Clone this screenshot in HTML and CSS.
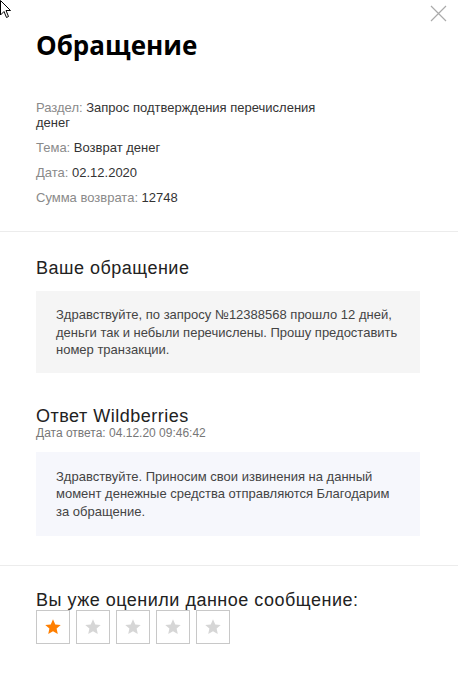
FILE: index.html
```
<!DOCTYPE html>
<html lang="ru">
<head>
    <meta charset="UTF-8">
    <meta name="viewport" content="width=device-width, initial-scale=1.0">
    <title>Обращение</title>
    <link rel="stylesheet" href="styles.css">
</head>
<body>
    <div class="modal">
        <svg class="cursor" width="12" height="20" viewBox="0 0 12 20">
            <path d="M0.5 0.5 L0.5 15 L4 11.5 L6.5 17.5 L8.5 16.5 L6 10.5 L10.5 10.5 Z" fill="#fff" stroke="#000" stroke-width="1"/>
        </svg>
        <button class="close" aria-label="Закрыть">
            <svg width="17" height="17" viewBox="0 0 17 17">
                <path d="M1 1 L16 16 M16 1 L1 16" stroke="#aaa" stroke-width="1.2"/>
            </svg>
        </button>

        <section class="head">
            <h1>Обращение</h1>
            <ul class="info">
                <li><span class="label">Раздел:</span> Запрос подтверждения перечисления денег</li>
                <li><span class="label">Тема:</span> Возврат денег</li>
                <li><span class="label">Дата:</span> 02.12.2020</li>
                <li><span class="label">Сумма возврата:</span> 12748</li>
            </ul>
        </section>

        <section class="messages">
            <h2>Ваше обращение</h2>
            <div class="message">
                Здравствуйте, по запросу №12388568 прошло 12 дней, деньги так и небыли перечислены. Прошу предоставить номер транзакции.
            </div>

            <h2 class="answer-title">Ответ Wildberries</h2>
            <div class="answer-date">Дата ответа: 04.12.20 09:46:42</div>
            <div class="message answer">
                Здравствуйте. Приносим свои извинения на данный момент денежные средства отправляются Благодарим за обращение.
            </div>
        </section>

        <section class="rating">
            <h2>Вы уже оценили данное сообщение:</h2>
            <div class="stars">
                <span class="star active"><svg viewBox="0 0 20 20"><path d="M10 1.5 L12.5 7.2 L18.6 7.7 L14 11.8 L15.3 17.8 L10 14.7 L4.7 17.8 L6 11.8 L1.4 7.7 L7.5 7.2 Z"/></svg></span>
                <span class="star"><svg viewBox="0 0 20 20"><path d="M10 1.5 L12.5 7.2 L18.6 7.7 L14 11.8 L15.3 17.8 L10 14.7 L4.7 17.8 L6 11.8 L1.4 7.7 L7.5 7.2 Z"/></svg></span>
                <span class="star"><svg viewBox="0 0 20 20"><path d="M10 1.5 L12.5 7.2 L18.6 7.7 L14 11.8 L15.3 17.8 L10 14.7 L4.7 17.8 L6 11.8 L1.4 7.7 L7.5 7.2 Z"/></svg></span>
                <span class="star"><svg viewBox="0 0 20 20"><path d="M10 1.5 L12.5 7.2 L18.6 7.7 L14 11.8 L15.3 17.8 L10 14.7 L4.7 17.8 L6 11.8 L1.4 7.7 L7.5 7.2 Z"/></svg></span>
                <span class="star"><svg viewBox="0 0 20 20"><path d="M10 1.5 L12.5 7.2 L18.6 7.7 L14 11.8 L15.3 17.8 L10 14.7 L4.7 17.8 L6 11.8 L1.4 7.7 L7.5 7.2 Z"/></svg></span>
            </div>
        </section>
    </div>
</body>
</html>
```

FILE: styles.css
```
body {
    margin: 0;
    background: #fff;
    font-family: "Liberation Sans", Arial, sans-serif;
    color: #333;
}

.modal {
    position: relative;
    width: 458px;
    min-height: 693px;
}

.cursor {
    position: absolute;
    left: 0;
    top: 0;
}

.close {
    position: absolute;
    top: 5px;
    right: 11px;
    padding: 0;
    border: none;
    background: none;
    cursor: pointer;
}

.close svg {
    display: block;
}

.head {
    padding: 26px 36px 26px;
    border-bottom: 1px solid #ececec;
}

h1 {
    margin: 0 0 36px;
    font-family: "Open Sans", sans-serif;
    font-size: 26px;
    font-weight: 700;
    line-height: 38px;
    color: #000;
}

.info {
    list-style: none;
    margin: 0;
    padding: 0;
    width: 285px;
    font-size: 13px;
    line-height: 15px;
}

.info li {
    margin-bottom: 10px;
}

.info li:last-child {
    margin-bottom: 0;
}

.label {
    color: #8a8a8a;
}

.messages {
    padding: 25px 38px 29px 36px;
    border-bottom: 1px solid #ececec;
}

h2 {
    margin: 0;
    font-size: 18px;
    font-weight: 400;
    line-height: 22px;
    letter-spacing: 0.5px;
    color: #222;
}

.message {
    margin-top: 12px;
    padding: 15px 20px 14px;
    background: #f5f5f5;
    font-size: 13px;
    line-height: 17.5px;
    color: #444;
}

.answer-title {
    margin-top: 32px;
}

.answer-date {
    margin-top: 0;
    font-size: 12px;
    line-height: 12px;
    color: #777;
}

.message.answer {
    margin-top: 13px;
    padding: 16px 20px 16px;
    background: #f6f7fc;
}

.rating {
    padding: 25px 36px;
}

.rating h2 {
    margin-bottom: 1px;
    line-height: 18px;
}

.stars {
    display: flex;
    gap: 6px;
}

.star {
    display: flex;
    align-items: center;
    justify-content: center;
    width: 32px;
    height: 32px;
    border: 1px solid #c8c8c8;
    fill: #d6d6d6;
}

.star svg {
    width: 18px;
    height: 18px;
}

.star.active {
    fill: #ff7f00;
}
```
